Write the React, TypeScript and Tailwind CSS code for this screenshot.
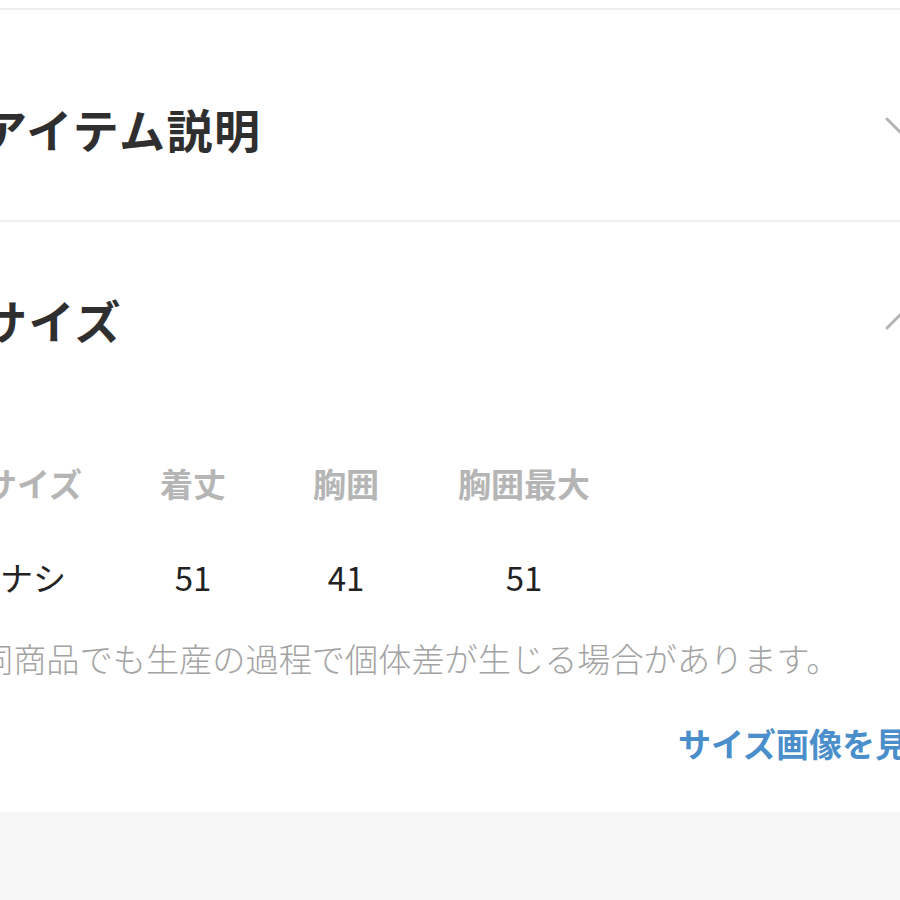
import type { ReactNode } from 'react';

const font = { fontFamily: '"Noto Sans CJK JP", "Noto Sans", sans-serif' };

const columns = [
  { label: 'サイズ', value: 'ナシ', width: 'w-[140px]' },
  { label: '着丈', value: '51', width: 'w-[180px]' },
  { label: '胸囲', value: '41', width: 'w-[126px]' },
  { label: '胸囲最大', value: '51', width: 'w-[230px]' },
];

function Chevron({ up }: { up?: boolean }) {
  return (
    <svg width="40" height="22" viewBox="0 0 40 22" className="shrink-0 -mr-[25px]">
      <polyline
        points={up ? '2,20 20,2 38,20' : '2,2 20,20 38,2'}
        fill="none"
        stroke="#b3b3b3"
        strokeWidth="3"
        strokeLinecap="round"
        strokeLinejoin="round"
      />
    </svg>
  );
}

function SectionHeader({ children, up }: { children: ReactNode; up?: boolean }) {
  return (
    <div className="flex items-center justify-between">
      <h2 className="-ml-[19px] text-[46px] font-bold leading-none tracking-[1.5px] text-[#2f2f2f] whitespace-nowrap">
        {children}
      </h2>
      <Chevron up={up} />
    </div>
  );
}

export default function App() {
  return (
    <div className="w-[900px] h-[900px] overflow-hidden bg-[#f6f6f6]" style={font}>
      <div className="bg-white h-[812px] pt-[8px]">
        <div className="border-t-2 border-[#eeeeee] pt-[95px] pb-[69px]">
          <SectionHeader>アイテム説明</SectionHeader>
        </div>

        <div className="border-t-2 border-[#eeeeee] pt-[74px]">
          <SectionHeader up>サイズ</SectionHeader>

          <div className="-ml-[37px] mt-[125px] flex">
            {columns.map((col) => (
              <div key={col.label} className={`${col.width} flex flex-col items-center`}>
                <span className="text-[33px] font-bold leading-none text-[#b5b5b5] whitespace-nowrap">
                  {col.label}
                </span>
                <span className="mt-[61px] text-[33px] leading-none text-[#222222] whitespace-nowrap">
                  {col.value}
                </span>
              </div>
            ))}
          </div>

          <p className="-ml-[20px] mt-[47px] text-[33.2px] font-light leading-none text-[#a3a3a3] whitespace-nowrap">
            同商品でも生産の過程で個体差が生じる場合があります。
          </p>

          <div className="ml-[678px] mt-[53px] text-[33px] font-bold leading-none text-[#4a8fcb] whitespace-nowrap">
            サイズ画像を見る
          </div>
        </div>
      </div>
    </div>
  );
}
